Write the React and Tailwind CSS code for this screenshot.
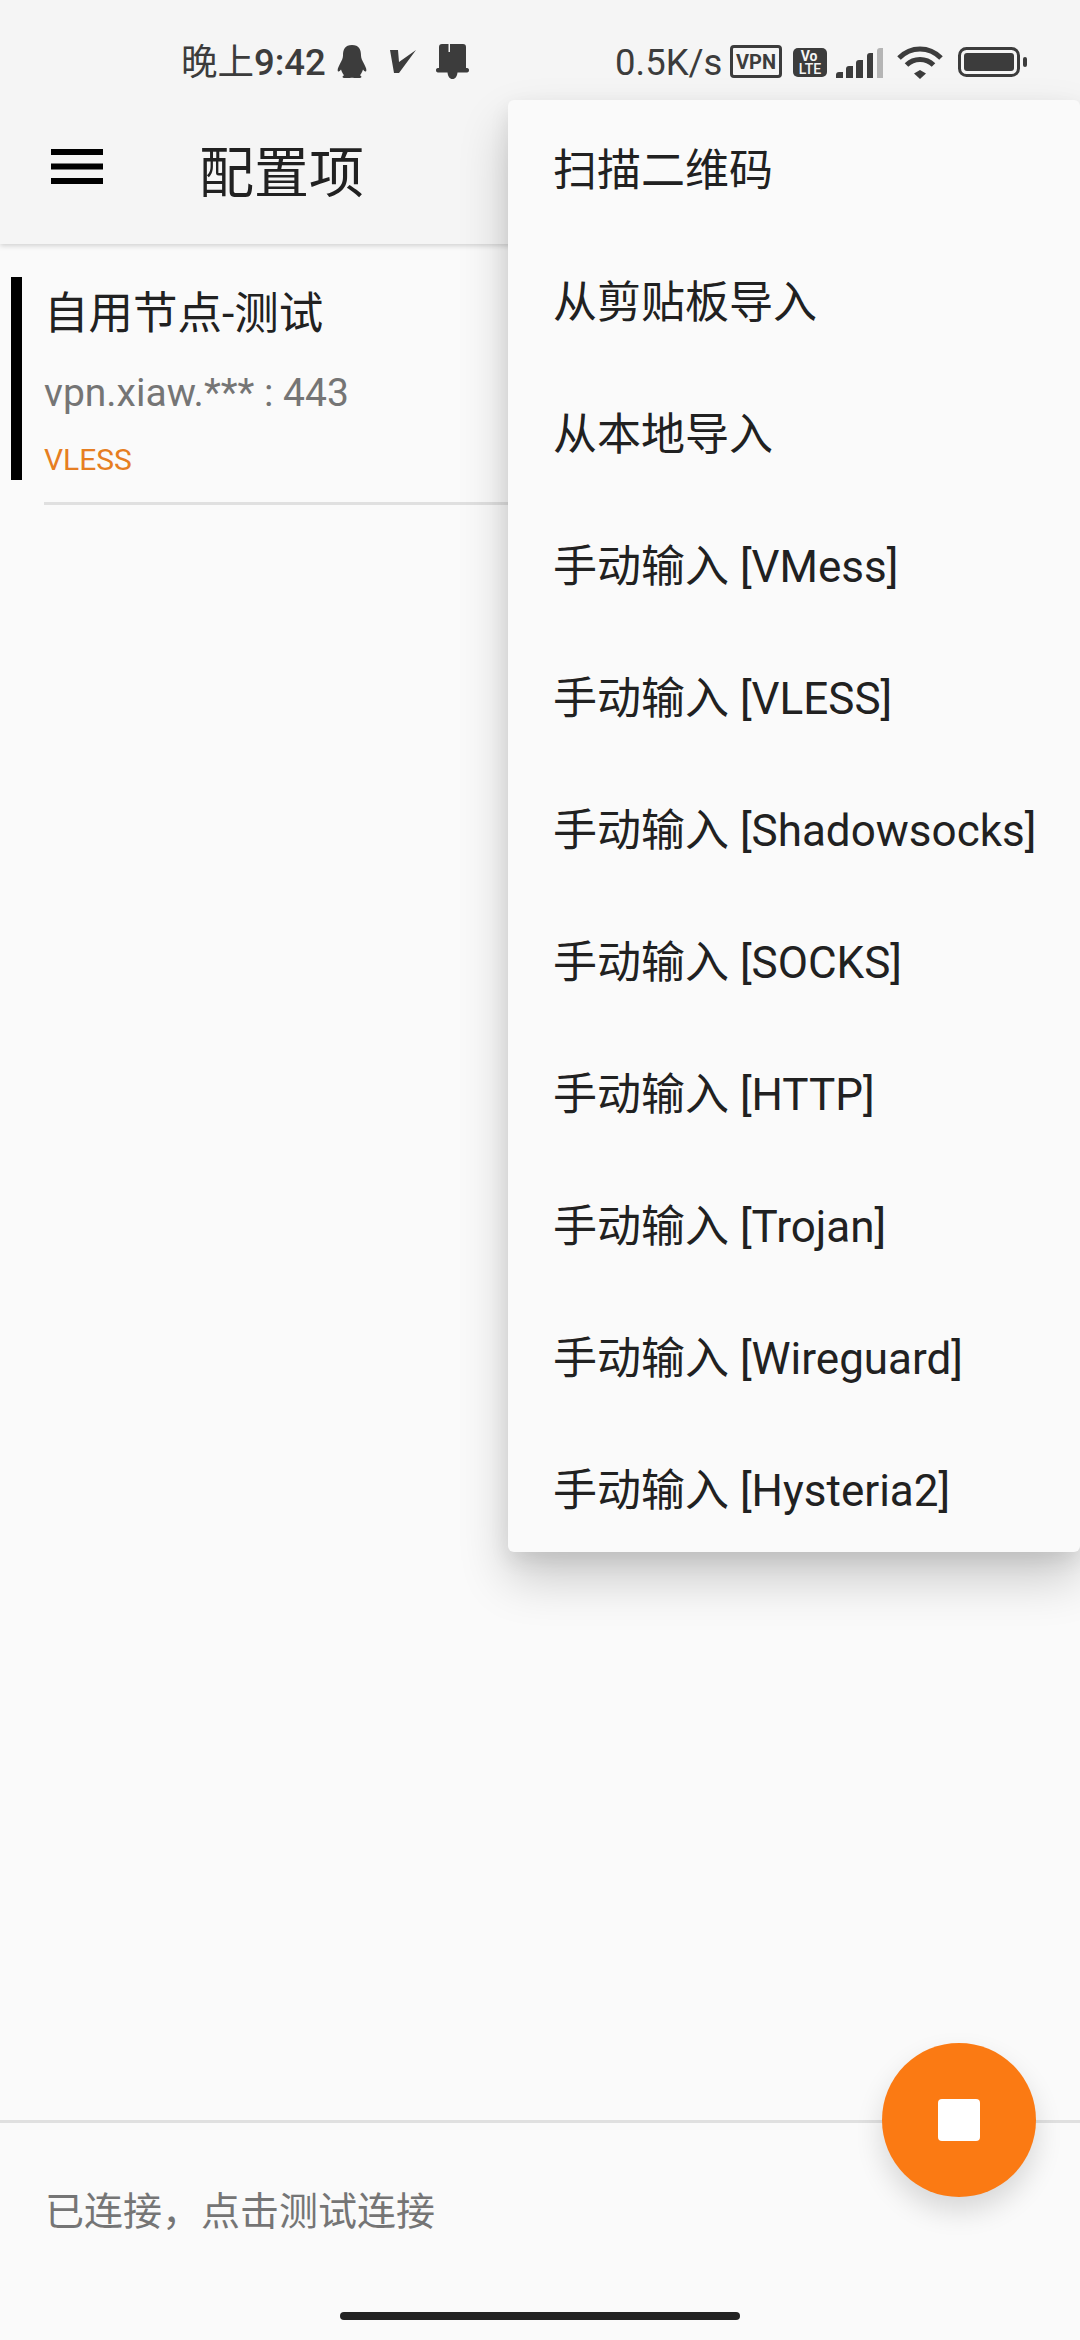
import React from "react";

const menuItems = [
  "扫描二维码",
  "从剪贴板导入",
  "从本地导入",
  "手动输入 [VMess]",
  "手动输入 [VLESS]",
  "手动输入 [Shadowsocks]",
  "手动输入 [SOCKS]",
  "手动输入 [HTTP]",
  "手动输入 [Trojan]",
  "手动输入 [Wireguard]",
  "手动输入 [Hysteria2]",
];

const fontStack = "font-['Roboto','Noto_Sans_CJK_SC',sans-serif]";

// Status bar icons
const Penguin = () => (
  <svg width="30" height="33" viewBox="0 0 30 35" preserveAspectRatio="none" className="fill-[#3c3c3c]">
    <path d="M15 0C8 0 6 5 6 11C6 14 5 16 3 20C1 24 0 27 1 28C2 28.500 3 27.500 4 26C5 29 6 31 7 32C5 33 5 35 8 35H13C14 34.500 16 34.500 17 35H22C25 35 25 33 23 32C24 31 25 29 26 26C27 27.500 28 28.500 29 28C30 27 29 24 27 20C25 16 24 14 24 11C24 5 22 0 15 0Z" />
  </svg>
);

const VeeIcon = () => (
  <svg width="26" height="24" viewBox="0 0 26 24" className="fill-[#3c3c3c]">
    <path d="M0 1H8L9 13L26 1L9 24H4Z" />
  </svg>
);

const BellIcon = () => (
  <svg width="33" height="35" viewBox="0 0 33 35" className="fill-[#3c3c3c]">
    <path d="M3 3C3 1 4 0 6 0H12.500V8H14V0H27C29 0 30 1 30 3V24H31C32.500 24 33 25 33 26C33 27.500 32.500 28.500 31 28.500H21.500C21 32.500 19.500 35 16.500 35C13.500 35 12 32.500 11.500 28.500H2C.5 28.500 0 27.500 0 26C0 25 .5 24 2 24H3Z" />
  </svg>
);

const VpnBadge = () => (
  <svg width="52" height="33" viewBox="0 0 52 33">
    <rect x="1.500" y="1.500" width="49" height="30" rx="2.500" fill="none" stroke="#3c3c3c" strokeWidth="3" />
    <text x="26" y="24" textAnchor="middle" fontFamily="Roboto" fontWeight="700" fontSize="20" fill="#3c3c3c">VPN</text>
  </svg>
);

const VolteBadge = () => (
  <svg width="34" height="29" viewBox="0 0 34 29">
    <rect width="34" height="29" rx="5" fill="#3c3c3c" />
    <text x="16" y="13" textAnchor="middle" fontFamily="Roboto" fontWeight="700" fontSize="14" fill="#f5f5f5">Vo</text>
    <text x="17" y="26" textAnchor="middle" fontFamily="Roboto" fontWeight="500" fontSize="14" fill="#f5f5f5">LTE</text>
  </svg>
);

const SignalIcon = () => (
  <svg width="47" height="30" viewBox="0 0 47 30">
    <path d="M0 30V27Q0 24 3 24H7V30Z" fill="#3c3c3c" />
    <path d="M10 30V21Q10 18 13 18H17V30Z" fill="#3c3c3c" />
    <path d="M20 30V15Q20 12 23 12H27V30Z" fill="#3c3c3c" />
    <path d="M31 30V8Q31 5 34 5H37V30Z" fill="#3c3c3c" />
    <path d="M41 30V3Q41 0 44 0H47V30Z" fill="#b5b5b5" />
  </svg>
);

const WifiIcon = () => (
  <svg width="46" height="33" viewBox="0 0 46 33" fill="none" stroke="#3c3c3c" strokeWidth="5">
    <path d="M2 12C14 0 32 0 44 12" />
    <path d="M9.500 19C17 11.500 29 11.500 36.500 19" />
    <path d="M23 24L29 27.500L23 33L17 27.500Z" fill="#3c3c3c" stroke="none" />
  </svg>
);

const BatteryIcon = () => (
  <svg width="69" height="30" viewBox="0 0 69 30">
    <rect x="1.500" y="1.500" width="59" height="27" rx="7" fill="none" stroke="#3c3c3c" strokeWidth="3" />
    <rect x="6" y="6" width="50" height="18" rx="3" fill="#3c3c3c" />
    <rect x="65" y="10" width="4" height="10" rx="2" fill="#3c3c3c" />
  </svg>
);

const App = () => {
  return (
    <div className={`relative flex h-[2340px] w-[1080px] flex-col overflow-hidden bg-[#fafafa] ${fontStack}`}>
      {/* Status bar + toolbar */}
      <header className="h-[244px] shrink-0 bg-[#f5f5f5] shadow-[0_2px_5px_rgba(0,0,0,0.16)]">
        <div className="flex h-[100px] items-start pl-[181px] pt-[45px] text-[#3c3c3c]">
          <div className="flex h-[36px] w-[145px] items-center whitespace-nowrap text-[36.500px] leading-none">
            <span>晚上</span>
            <span className="font-medium">9:42</span>
          </div>
          <div className="ml-[11px]"><Penguin /></div>
          <div className="ml-[23px] mt-[4px]"><VeeIcon /></div>
          <div className="ml-[20px] -mt-[1px]"><BellIcon /></div>
          <div className="ml-[146px] flex h-[36px] w-[106px] items-center whitespace-nowrap text-[36.500px] leading-none">0.5K/s</div>
          <div className="ml-[9px]"><VpnBadge /></div>
          <div className="ml-[11px] mt-[3px]"><VolteBadge /></div>
          <div className="ml-[9px] mt-[3px]"><SignalIcon /></div>
          <div className="ml-[14px] mt-[1px]"><WifiIcon /></div>
          <div className="ml-[15px] mt-[2px]"><BatteryIcon /></div>
        </div>
        <div className="flex h-[144px] items-center">
          <svg width="52" height="35" viewBox="0 0 52 35" className="ml-[51px] mb-[12px] fill-black">
            <rect width="52" height="6" />
            <rect y="14.500" width="52" height="6" />
            <rect y="29" width="52" height="6" />
          </svg>
          <h1 className="ml-[96px] mt-[2px] text-[55px] font-normal leading-none text-[#212121]">配置项</h1>
        </div>
      </header>

      {/* Server list */}
      <main className="flex-1 pt-[33px]">
        <div className="flex pl-[11px]">
          <div className="w-[11px] bg-black" />
          <div className="ml-[22px] flex flex-col">
            <div className="flex h-[70px] items-center pt-[4px] text-[44.500px] leading-none text-[#212121]">自用节点-测试</div>
            <div className="flex h-[92px] items-center text-[39px] leading-none text-[#757575]">vpn.xiaw.*** : 443</div>
            <div className="flex h-[41px] items-center text-[30px] leading-none text-[#e67e22]">VLESS</div>
          </div>
        </div>
        <div className="ml-[44px] mt-[22px] h-[3px] bg-[#e0e0e0]" />
      </main>

      {/* Bottom connection status */}
      <footer className="h-[220px] shrink-0 border-t-[3px] border-[#e0e0e0]">
        <div className="flex h-[178px] items-center pl-[45px] text-[39px] leading-none text-[#757575]">已连接，点击测试连接</div>
        <div className="flex justify-center pt-[11px]">
          <div className="h-[8px] w-[400px] rounded-full bg-[#222222]" />
        </div>
      </footer>

      {/* Add config popup menu */}
      <div className="absolute right-0 top-[100px] h-[1452px] w-[572px] rounded-[6px] bg-[#fafafa] pt-[5px] shadow-[0_26px_50px_rgba(0,0,0,0.2),0_8px_20px_rgba(0,0,0,0.08)]">
        {menuItems.map((item) => (
          <div key={item} className="flex h-[132px] items-center whitespace-nowrap pl-[45px] text-[44px] leading-none text-[#212121]">
            {item}
          </div>
        ))}
      </div>

      {/* Stop button */}
      <button className="absolute left-[882px] top-[2043px] flex h-[154px] w-[154px] items-center justify-center rounded-full bg-[#fb7a13] shadow-[0_14px_28px_rgba(0,0,0,0.14)]">
        <span className="h-[42px] w-[42px] rounded-[4px] bg-white" />
      </button>
    </div>
  );
};

export default App;
